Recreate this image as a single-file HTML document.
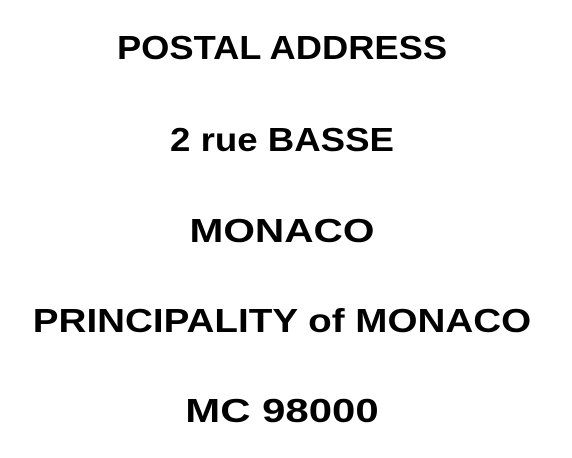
<!DOCTYPE html>
<html><head><style>
html,body{margin:0;padding:0;width:572px;height:458px;background:#fff;overflow:hidden}
div{position:absolute;left:-4px;width:572px;text-align:center;font-family:"Liberation Sans",sans-serif;font-weight:bold;font-size:33px;line-height:40px;color:#000}
</style></head><body>
<div style="top:28px;transform:scaleX(1.1)">POSTAL ADDRESS</div>
<div style="top:120px;transform:scaleX(1.11)">2 rue BASSE</div>
<div style="top:211px;transform:scaleX(1.23)">MONACO</div>
<div style="top:301px;transform:scaleX(1.17)">PRINCIPALITY of MONACO</div>
<div style="top:391px;transform:scaleX(1.27)">MC 98000</div>
</body></html>
